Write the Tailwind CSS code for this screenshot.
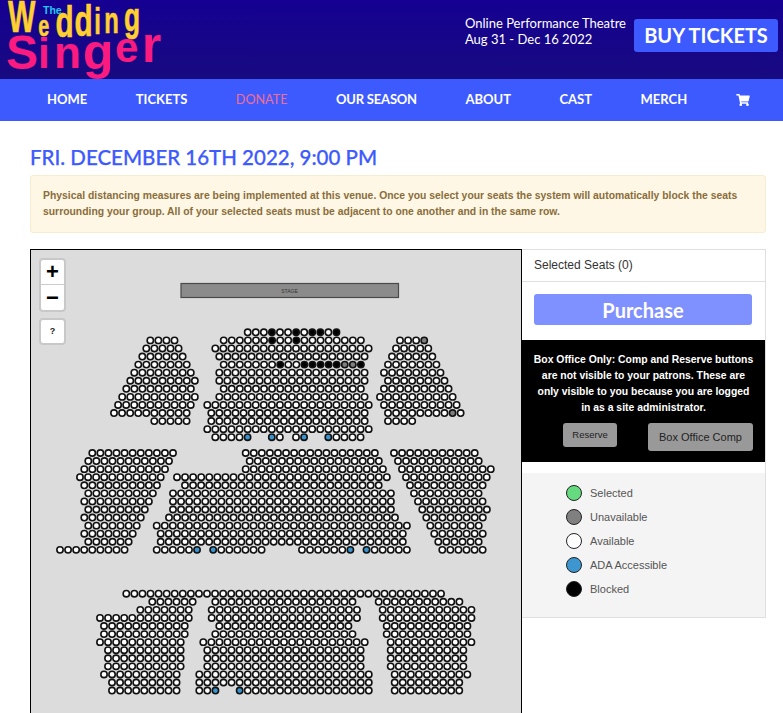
<!DOCTYPE html>
<html lang="en">
<head>
    <meta charset="UTF-8">
    <meta name="viewport" content="width=device-width, initial-scale=1.0">
    <title>The Wedding Singer - Seats</title>
    <script src="https://cdn.jsdelivr.net/npm/@tailwindcss/browser@4"></script>
</head>
<body class="bg-white h-[713px] overflow-hidden font-['Lato',sans-serif]">
    <!-- header -->
    <header class="h-[79px] bg-gradient-to-b from-[#150092] to-[#180a80] flex justify-between">
        <svg class="w-[170px] h-[79px] overflow-visible" viewBox="0 0 170 79">
            <text transform="scale(0.66 1)" font-family="Liberation Sans" font-weight="700" fill="#ffd02f" stroke="#ffd02f" stroke-width="0.6"><tspan x="12" y="32" font-size="44">W</tspan><tspan x="58" y="36" font-size="30">e</tspan><tspan x="84" y="37" font-size="45">d</tspan><tspan x="113" y="36" font-size="45">d</tspan><tspan x="143" y="34" font-size="36">i</tspan><tspan x="158" y="33" font-size="36">n</tspan><tspan x="188" y="31" font-size="40">g</tspan></text>
            <text x="43" y="14" font-family="Liberation Sans" font-weight="700" font-size="10.5" fill="#22c8f0">The</text>
            <text font-family="Liberation Sans" font-weight="700" fill="#fb1a80"><tspan x="6" y="69" font-size="48">S</tspan><tspan x="38" y="68" font-size="42">i</tspan><tspan x="54" y="68" font-size="44">n</tspan><tspan x="83" y="69" font-size="50">g</tspan><tspan x="115" y="62" font-size="42">e</tspan><tspan x="142" y="62" font-size="50">r</tspan></text>
        </svg>
        <div class="flex items-start pt-[15px] pr-[5px]">
            <p class="text-white text-[13px] leading-[16px] mr-[8px]">Online Performance Theatre<br>Aug 31 - Dec 16 2022</p>
            <a href="#" class="bg-[#3d5afe] text-white text-[20px] font-bold leading-[33px] w-[144px] text-center rounded-[3px] mt-[4px]">BUY TICKETS</a>
        </div>
    </header>

    <!-- nav -->
    <nav class="h-[42px] bg-[#3d5afe] flex items-center gap-[48.5px] pl-[47px] text-[13px] font-bold text-white whitespace-nowrap">
        <a href="#">HOME</a>
        <a href="#">TICKETS</a>
        <a href="#" class="text-[#ef6f93] font-normal text-[12.6px]">DONATE</a>
        <a href="#" class="tracking-[-0.2px]">OUR SEASON</a>
        <a href="#">ABOUT</a>
        <a href="#">CAST</a>
        <a href="#">MERCH</a>
        <a href="#"><svg class="w-[14px] h-[12px]" viewBox="0 0 576 512" fill="#fff"><path d="M528.12 301.319l47.273-208C578.806 78.301 567.391 64 551.99 64H159.208l-9.166-44.81C147.758 8.021 137.93 0 126.529 0H24C10.745 0 0 10.745 0 24v16c0 13.255 10.745 24 24 24h69.883l70.248 343.435C147.325 417.1 136 435.222 136 456c0 30.928 25.072 56 56 56s56-25.072 56-56c0-15.674-6.447-29.835-16.824-40h209.647C430.447 426.165 424 440.326 424 456c0 30.928 25.072 56 56 56s56-25.072 56-56c0-22.172-12.888-41.332-31.579-50.405l5.517-24.276c3.413-15.018-8.002-29.319-23.403-29.319H218.117l-6.545-32h293.145c11.206 0 20.92-7.754 23.403-18.681z"/></svg></a>
    </nav>

    <main class="w-[736px] ml-[30px]">
        <h1 class="text-[20.5px] leading-[26px] font-medium text-[#3d5afe] [-webkit-text-stroke:0.25px_#3d5afe] mt-[23px]">FRI. DECEMBER 16TH 2022, 9:00 PM</h1>
        <div class="mt-[5px] h-[58px] bg-[#fef7e5] border border-[#f6ecd0] rounded-[3px] px-[12px] pt-[12px] text-[#8a6d3b] text-[10.38px] leading-[16px] font-bold font-['Liberation_Sans',sans-serif]">
            Physical distancing measures are being implemented at this venue. Once you select your seats the system will automatically block the seats surrounding your group. All of your selected seats must be adjacent to one another and in the same row.
        </div>

        <div class="flex mt-[16px] items-start">
            <!-- seat map -->
            <div class="relative w-[492px] h-[480px] bg-[#dcdcdc] border border-black shrink-0">
                <svg id="map" class="absolute left-[-1px] top-[-1px] w-[492px] h-[480px]" viewBox="30 249 492 480">
                    <rect x="181" y="283.5" width="217.5" height="14" fill="#8b8b8b" stroke="#4a4a4a" stroke-width="1.2"/>
                    <text x="289.5" y="292.5" text-anchor="middle" font-family="Liberation Sans" font-size="5" fill="#333">STAGE</text>
                </svg>
                <div class="absolute left-[8px] top-[8px] w-[27px] rounded-[4px] border-2 border-[#c8c8c8] bg-white text-black font-bold font-['Liberation_Sans',sans-serif]">
                    <div class="h-[25px] flex items-center justify-center border-b border-[#ccc] text-[22px] leading-none">+</div>
                    <div class="h-[25px] flex items-center justify-center text-[22px] leading-none">−</div>
                </div>
                <div class="absolute left-[8px] top-[68px] w-[27px] h-[27px] rounded-[4px] border-2 border-[#c8c8c8] bg-white flex items-center justify-center text-[9px] font-bold text-[#222] font-['Liberation_Sans',sans-serif]">?</div>
            </div>

            <!-- side panel -->
            <aside class="w-[244px] border border-l-0 border-[#dfdfdf] font-['Liberation_Sans',sans-serif]">
                <div class="h-[32px] flex items-center pl-[12px] pb-[2px] text-[12px] text-[#333] border-b border-[#dfdfdf]">Selected Seats (0)</div>
                <div class="h-[58px] pt-[12px] pl-[12px]">
                    <button class="w-[218px] h-[31px] bg-[#7f90ff] rounded-[3px] text-white text-[20px] font-bold font-['Lato',sans-serif]">Purchase</button>
                </div>
                <div class="bg-black h-[122px] pt-[12px] text-center">
                    <p class="text-white text-[10.4px] leading-[16px] font-bold w-[224px] mx-auto">Box Office Only: Comp and Reserve buttons are not visible to your patrons. These are only visible to you because you are logged in as a site administrator.</p>
                    <div class="flex items-start mt-[7px] pl-[41px]">
                        <button class="w-[54px] h-[24px] bg-[#999] rounded-[3px] text-[9.5px] text-[#222]">Reserve</button>
                        <button class="ml-[31px] w-[105px] h-[28px] bg-[#999] rounded-[3px] text-[11px] text-[#222]">Box Office Comp</button>
                    </div>
                </div>
                <div class="mt-[11px] h-[144px] bg-[#f4f4f4] pl-[44px] pt-[8px] text-[11px] text-[#555]">
                    <div class="h-[24px] flex items-center gap-[8px]"><span class="w-[16px] h-[16px] rounded-full border border-[#222] bg-[#66da7e]"></span>Selected</div>
                    <div class="h-[24px] flex items-center gap-[8px]"><span class="w-[16px] h-[16px] rounded-full border border-[#222] bg-[#808080]"></span>Unavailable</div>
                    <div class="h-[24px] flex items-center gap-[8px]"><span class="w-[16px] h-[16px] rounded-full border border-[#222] bg-white"></span>Available</div>
                    <div class="h-[24px] flex items-center gap-[8px]"><span class="w-[16px] h-[16px] rounded-full border border-[#222] bg-[#3d96cf]"></span>ADA Accessible</div>
                    <div class="h-[24px] flex items-center gap-[8px]"><span class="w-[16px] h-[16px] rounded-full border border-[#222] bg-black"></span>Blocked</div>
                </div>
            </aside>
        </div>
    </main>

    <script>
        // seat rows: [first x, seat count, extras], rows are 8.07px apart
        const STEP = 8.07;
        const COLORS = { k: '#000', g: '#7f7f7f', a: '#3a94cf' };
        const sections = [
            { y: 340.4, rows: [[150.3,4],[146.3,5],[142.3,6],[138.3,7],[134.3,8],[130.3,9],[126.3,9],[122.2,10],[118.1,10],[114,10],[154.3,5]] },
            { y: 332.3, rows: [
                [247.7,12,{k:[3,6,8,9,11]}],
                [223.7,18,{k:[6,9]}],
                [215.3,20],[219.3,19],
                [223.7,18,{k:[7,10,11,12,13,14,17],g:[15,16]}],
                [219.3,19],[219.3,19],[223.7,18],[219.3,19],
                [207.3,21],[211.3,20],[211.3,20],[207.3,21],
                [215.3,19,{a:[4,7,11,14],skip:[5,6,9,12,13]}]
            ] },
            { y: 340.4, rows: [[400,4,{g:[3]}],[396,5],[392,6],[388,7],[384,8],[388,8],[384,9],[380,10],[384,10],[388,10,{g:[8]}],[388,4]] },
            { y: 453, rows: [[92.3,11],[88.3,11],[84.3,11],[80,11],[84.3,10],[88.3,9],[84.3,9],[88.3,8],[84.3,8],[88.3,7],[84.3,7],[88.3,6],[60,9]] },
            { y: 453, rows: [
                [245.7,17],[249.7,17],[245.7,18],[177,27],[185,25],[173,28],[173,28],[173,28],[169,29],[156.7,32],[160.7,31],[160.7,31],
                [156.7,32,{a:[5,7,24,26],skip:[6,14,15,16,17,25]}]
            ] },
            { y: 453, rows: [[394,11],[398,11],[402,12],[406,11],[410,10],[414,9],[418,9],[422.3,9],[426.3,8],[430.3,7],[434.3,7],[438.3,6],[442.3,6]] },
            { y: 593.7, rows: [[126.3,40]] },
            { y: 601.8, rows: [[152.3,6],[140.3,7],[100,12],[104,11],[104,11],[100,11],[108,10],[108,10],[108,10],[104,10],[112,9],[112,9]] },
            { y: 601.8, rows: [
                [215.3,18],[211.7,19],[211.7,19],[219.3,17],[215.3,18],[203.3,21],[207.3,20],[207.3,20],[207.3,20],[199.3,22],[199.3,22],
                [199.3,22,{a:[2,5],skip:[3,4]}]
            ] },
            { y: 601.8, rows: [[378.7,11],[382.7,12],[382.7,12],[386.7,11],[386.7,11],[390.7,11],[390.7,10],[390.7,10],[390.7,10],[394.7,10],[394.7,9],[394.7,9]] }
        ];

        const map = document.getElementById('map');
        sections.forEach((section) => {
            section.rows.forEach(([x, count, extra = {}], r) => {
                for (let i = 0; i < count; i++) {
                    if (extra.skip && extra.skip.includes(i)) continue;
                    let fill = '#fff';
                    ['k', 'g', 'a'].forEach((key) => {
                        if (extra[key] && extra[key].includes(i)) fill = COLORS[key];
                    });
                    const seat = document.createElementNS('http://www.w3.org/2000/svg', 'circle');
                    seat.setAttribute('cx', x + i * STEP);
                    seat.setAttribute('cy', section.y + r * STEP);
                    seat.setAttribute('r', 3.15);
                    seat.setAttribute('fill', fill);
                    seat.setAttribute('stroke', '#111');
                    seat.setAttribute('stroke-width', 1.6);
                    map.appendChild(seat);
                }
            });
        });
    </script>
</body>
</html>
